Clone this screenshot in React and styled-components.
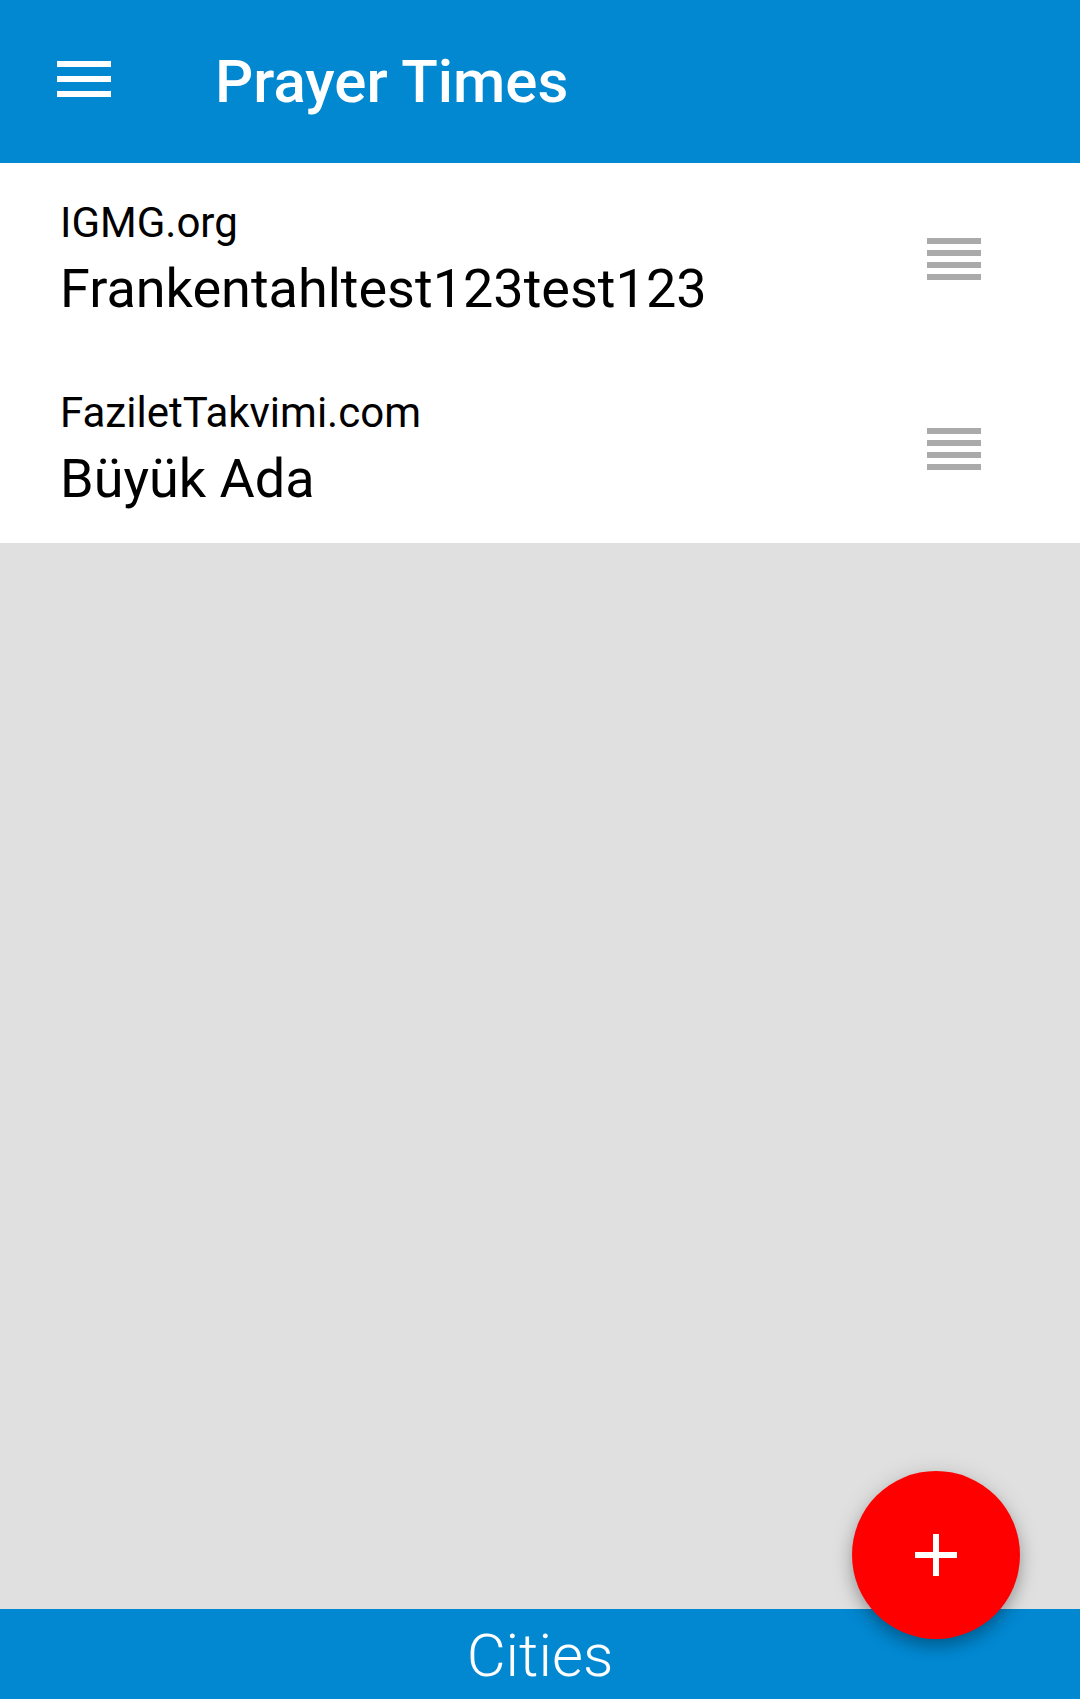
import styled, { createGlobalStyle } from "styled-components";

const GlobalStyle = createGlobalStyle`
  html, body {
    margin: 0;
    padding: 0;
  }
  body {
    font-family: Roboto, "Noto Sans", "Liberation Sans", sans-serif;
    background: #e0e0e0;
  }
  * {
    box-sizing: border-box;
  }
`;

const Screen = styled.div`
  position: relative;
  display: flex;
  flex-direction: column;
  min-height: 100vh;
  overflow: hidden;
`;

const AppBar = styled.header`
  height: 163px;
  flex-shrink: 0;
  display: flex;
  align-items: center;
  padding-left: 57px;
  background-color: #0288d1;
`;

const MenuButton = styled.button`
  display: flex;
  padding: 0;
  margin-top: -5px;
  border: none;
  background: none;
  cursor: pointer;
`;

const Title = styled.h1`
  margin: 0 0 0 104px;
  font-size: 60px;
  font-weight: 500;
  line-height: 70px;
  color: #fff;
`;

const CityList = styled.ul`
  margin: 0;
  padding: 0;
  list-style: none;
  background-color: #fff;
`;

const CityRow = styled.li`
  display: flex;
  align-items: center;
  padding: 35px 99px 33px 60px;
`;

const RowText = styled.div`
  flex: 1;
  display: flex;
  flex-direction: column;
  gap: 10px;
`;

const Source = styled.span`
  font-size: 42px;
  line-height: 49px;
  color: #000;
`;

const CityName = styled.span`
  font-size: 54px;
  line-height: 63px;
  color: #000;
`;

const Empty = styled.div`
  flex: 1;
  background-color: #e0e0e0;
`;

const BottomBar = styled.footer`
  height: 90px;
  flex-shrink: 0;
  display: flex;
  align-items: center;
  justify-content: center;
  padding-top: 4px;
  background-color: #0288d1;
`;

const TabLabel = styled.span`
  font-size: 60px;
  font-weight: 300;
  line-height: 70px;
  color: #fff;
`;

const Fab = styled.button`
  position: absolute;
  right: 60px;
  bottom: 60px;
  width: 168px;
  height: 168px;
  display: flex;
  align-items: center;
  justify-content: center;
  padding: 0;
  border: none;
  border-radius: 50%;
  background-color: #ff0000;
  box-shadow: 0 8px 14px rgba(0, 0, 0, 0.22), 0 3px 24px rgba(0, 0, 0, 0.14);
  cursor: pointer;
`;

const MenuIcon = () => (
  <svg width="54" height="36" viewBox="0 0 54 36">
    <rect x="0" y="0" width="54" height="6" fill="#fff" />
    <rect x="0" y="15" width="54" height="6" fill="#fff" />
    <rect x="0" y="30" width="54" height="6" fill="#fff" />
  </svg>
);

const DragHandle = () => (
  <svg width="54" height="42" viewBox="0 0 54 42">
    {[0, 12, 24, 36].map((y) => (
      <rect key={y} x="0" y={y} width="54" height="6" fill="#aaaaaa" />
    ))}
  </svg>
);

const PlusIcon = () => (
  <svg width="42" height="42" viewBox="0 0 42 42">
    <rect x="18" y="0" width="6" height="42" fill="#fff" />
    <rect x="0" y="18" width="42" height="6" fill="#fff" />
  </svg>
);

const cities = [
  { source: "IGMG.org", name: "Frankentahltest123test123" },
  { source: "FaziletTakvimi.com", name: "Büyük Ada" },
];

const App = () => {
  return (
    <Screen>
      <GlobalStyle />
      <AppBar>
        <MenuButton aria-label="Menu">
          <MenuIcon />
        </MenuButton>
        <Title>Prayer Times</Title>
      </AppBar>

      <CityList>
        {cities.map((city) => (
          <CityRow key={city.name}>
            <RowText>
              <Source>{city.source}</Source>
              <CityName>{city.name}</CityName>
            </RowText>
            <DragHandle />
          </CityRow>
        ))}
      </CityList>

      <Empty />

      <BottomBar>
        <TabLabel>Cities</TabLabel>
      </BottomBar>

      <Fab aria-label="Add city">
        <PlusIcon />
      </Fab>
    </Screen>
  );
};

export default App;
